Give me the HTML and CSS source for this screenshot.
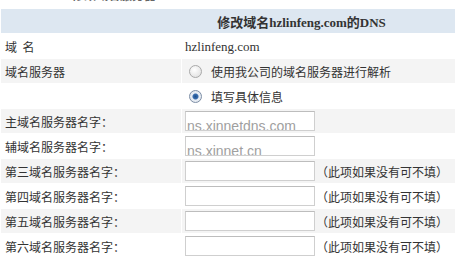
FILE: index.html
```html
<!DOCTYPE html>
<html lang="zh-CN">
<head>
    <meta charset="UTF-8">
    <title>修改域名DNS</title>
    <link rel="stylesheet" href="styles.css">
</head>
<body>
    <div class="title"><span><b class="mark">■</b>修改域名服务器</span></div>
    <table class="dns-table">
        <tr class="head">
            <td colspan="2">修改域名<span class="latin">hzlinfeng.com</span>的<span class="latin">DNS</span></td>
        </tr>
        <tr>
            <td class="label">域&nbsp;&nbsp;名</td>
            <td class="value"><span class="latin-plain">hzlinfeng.com</span></td>
        </tr>
        <tr class="alt">
            <td class="label">域名服务器</td>
            <td class="value"><label class="choice"><input type="radio" name="dnsmode" class="radio">使用我公司的域名服务器进行解析</label></td>
        </tr>
        <tr>
            <td class="label"></td>
            <td class="value"><label class="choice"><input type="radio" name="dnsmode" class="radio" checked>填写具体信息</label></td>
        </tr>
        <tr class="alt">
            <td class="label">主域名服务器名字：</td>
            <td class="value"><input type="text" class="field" value="ns.xinnetdns.com"></td>
        </tr>
        <tr>
            <td class="label">辅域名服务器名字：</td>
            <td class="value"><input type="text" class="field" value="ns.xinnet.cn"></td>
        </tr>
        <tr class="alt">
            <td class="label">第三域名服务器名字：</td>
            <td class="value"><input type="text" class="field"><span class="hint">（此项如果没有可不填）</span></td>
        </tr>
        <tr>
            <td class="label">第四域名服务器名字：</td>
            <td class="value"><input type="text" class="field"><span class="hint">（此项如果没有可不填）</span></td>
        </tr>
        <tr class="alt">
            <td class="label">第五域名服务器名字：</td>
            <td class="value"><input type="text" class="field"><span class="hint">（此项如果没有可不填）</span></td>
        </tr>
        <tr>
            <td class="label">第六域名服务器名字：</td>
            <td class="value"><input type="text" class="field"><span class="hint">（此项如果没有可不填）</span></td>
        </tr>
    </table>
</body>
</html>
```

FILE: styles.css
```css
body, html {
    margin: 0;
    padding: 0;
    overflow: hidden;
    background: #fff;
}

body {
    font-family: "Noto Sans CJK SC", "Noto Sans", sans-serif;
    font-size: 12px;
    color: #333;
}

.title {
    height: 9px;
    overflow: hidden;
    font-weight: bold;
    font-size: 12px;
}

.title span {
    display: block;
    margin-top: -12px;
    line-height: 14px;
    color: #666;
}

.title .mark {
    display: inline-block;
    width: 72px;
}

.dns-table {
    width: 603px;
    border-spacing: 1px;
    border-collapse: separate;
    margin-top: -1px;
}

.dns-table td {
    height: 24px;
    padding: 0;
}

.head td {
    background: #dde7f1;
    text-align: center;
    font-weight: bold;
    font-size: 13px;
    color: #333;
}

.latin {
    font-family: "Liberation Serif", serif;
    font-size: 13px;
}

.latin-plain {
    font-family: "Liberation Serif", serif;
    font-size: 13px;
    color: #333;
}

.alt td {
    background: #f4f4f4;
}

.label {
    width: 176px;
    padding-left: 4px !important;
}

.value {
    padding-left: 3px !important;
}

.choice {
    display: flex;
    align-items: center;
}

.radio {
    appearance: none;
    -webkit-appearance: none;
    width: 13px;
    height: 13px;
    margin: 0 9px 0 4px;
    border: 1px solid #a9a9a9;
    border-radius: 50%;
    background: radial-gradient(circle at 40% 35%, #fff 0%, #e6e6e6 70%, #d4d4d4 100%);
    box-sizing: border-box;
}

.radio:checked {
    border-color: #7d8ea6;
    background: radial-gradient(circle, #1d4f8c 0, #3a6fb0 2.5px, #e9eef5 3.5px, #dfe4ea 100%);
}

.field {
    width: 130px;
    height: 20px;
    box-sizing: border-box;
    margin: 0;
    padding: 10px 0 0 1px;
    border: 1px solid #cfcfcf;
    border-top-color: #bdbdbd;
    font-family: "Liberation Sans", Arial, sans-serif;
    font-size: 14px;
    line-height: 16px;
    color: #a0a0a0;
    background: #fff;
    vertical-align: middle;
}

.hint {
    vertical-align: middle;
    margin-left: 1px;
    letter-spacing: 0;
}
```
